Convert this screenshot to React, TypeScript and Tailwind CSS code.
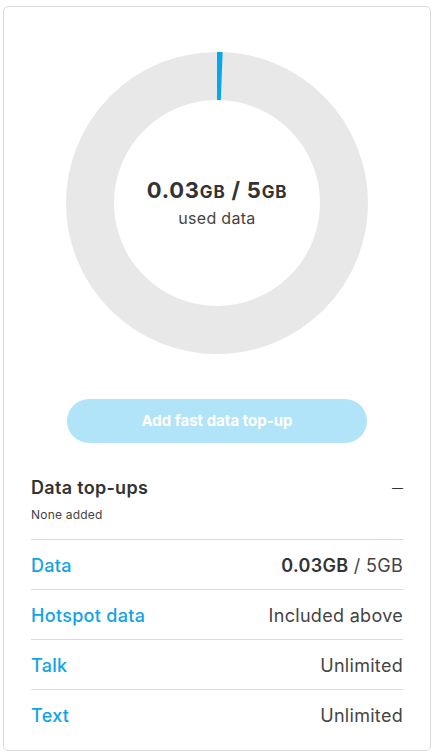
import React from "react";

const font = { fontFamily: "Inter, 'Open Sans', sans-serif" };

function Donut() {
  const r = 127;
  const c = 2 * Math.PI * r;
  const used = 0.006 * c;
  return (
    <div className="relative w-[302px] h-[302px]">
      <svg width="302" height="302" viewBox="0 0 302 302" className="absolute inset-0">
        <circle cx="151" cy="151" r={r} fill="none" stroke="#e8e8e8" strokeWidth="48" />
        <circle
          cx="151"
          cy="151"
          r={r}
          fill="none"
          stroke="#0aa6ea"
          strokeWidth="48"
          strokeDasharray={`${used} ${c}`}
          transform="rotate(-90 151 151)"
        />
      </svg>
      <div className="absolute inset-0 flex flex-col items-center justify-center">
        <div className="text-[#333] font-bold text-[22px] leading-none tracking-[0.8px] mt-[-2px]">
          0.03<span className="text-[17px]">GB</span> / 5<span className="text-[17px]">GB</span>
        </div>
        <div className="text-[#444] text-[16px] mt-[9px] leading-none tracking-[0.3px]">used data</div>
      </div>
    </div>
  );
}

function Row({ label, children }: { label: string; children: React.ReactNode }) {
  return (
    <div className="flex items-center justify-between h-[50px] border-t border-[#dcdcdc] pt-[2px] text-[18px] tracking-[0.3px]">
      <span className="text-[#12a3e6] font-medium">{label}</span>
      <span className="text-[#444]">{children}</span>
    </div>
  );
}

export default function App() {
  return (
    <div className="w-[434px] h-[756px] bg-white pt-[6px] px-[3px]" style={font}>
      <div className="h-[745px] border border-[#dadada] rounded-[5px] px-[27px] flex flex-col">
        <div className="flex justify-center pt-[45px]">
          <Donut />
        </div>
        <div className="flex justify-center mt-[45px]">
          <button className="w-[300px] h-[44px] rounded-full bg-[#b2e4f9] text-white font-bold text-[15px]">
            Add fast data top-up
          </button>
        </div>
        <div className="mt-[32px] flex justify-between items-start">
          <span className="text-[#333] text-[18px] font-semibold leading-[26px] tracking-[0.3px]">Data top-ups</span>
          <span className="text-[#333] text-[11px] leading-[26px]">—</span>
        </div>
        <div className="text-[#444] text-[12px] mt-[5px] mb-[15px] tracking-[0.2px]">None added</div>
        <Row label="Data">
          <span className="font-semibold text-[#333]">0.03GB</span> / 5GB
        </Row>
        <Row label="Hotspot data">Included above</Row>
        <Row label="Talk">Unlimited</Row>
        <Row label="Text">Unlimited</Row>
      </div>
    </div>
  );
}
